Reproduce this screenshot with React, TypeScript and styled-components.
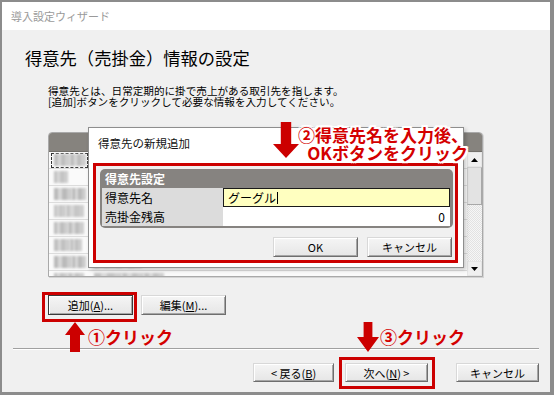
import React from "react";
import styled, { createGlobalStyle } from "styled-components";

const RED = "#cc0000";
const TEXT_RED = "#d40000";

const GlobalStyle = createGlobalStyle`
  html, body { margin: 0; padding: 0; background: #ffffff; }
  body { font-family: "Noto Sans CJK JP", "Noto Sans", sans-serif; }
  * { box-sizing: border-box; }
`;

const Window = styled.div`
  width: 554px;
  height: 395px;
  border: 2px solid #8c8c8c;
  border-right-width: 4px;
  border-bottom-width: 3px;
  display: flex;
  flex-direction: column;
  background: #f0f0f0;
  overflow: hidden;
`;

const TitleBar = styled.div`
  height: 28px;
  flex: none;
  background: #ffffff;
  display: flex;
  align-items: center;
  padding-left: 9px;
  font-size: 11px;
  color: #9a9a9a;
`;

const Body = styled.div`
  position: relative;
  flex: 1;
  display: flex;
  flex-direction: column;
`;

const Heading = styled.h1`
  margin: 17px 0 0 23px;
  font-size: 17.3px;
  line-height: 22px;
  font-weight: 400;
  color: #000;
`;

const Desc = styled.p`
  margin: 16px 0 0 46px;
  font-size: 10.6px;
  line-height: 11px;
  color: #000;
`;

const List = styled.div`
  margin: 25px 0 0 46px;
  width: 435px;
  height: 145px;
  flex: none;
  border: 1px solid #a9a9a9;
  border-radius: 4px 4px 0 0;
  background: #f7f7f7;
  display: flex;
  flex-direction: column;
  overflow: hidden;
  box-shadow: 1px 1px 0 #d4d4d4;
`;

const ListHeader = styled.div`
  height: 19px;
  flex: none;
  background: #86837e;
  border-bottom: 1px solid #74716c;
`;

const ListMain = styled.div`
  flex: 1;
  display: flex;
  min-height: 0;
`;

const Rows = styled.div`
  flex: 1;
  overflow: hidden;
  display: flex;
  flex-direction: column;
`;

const Row = styled.div`
  height: 17px;
  flex: none;
  border-bottom: 1px solid #dcdcdc;
  display: flex;
  align-items: center;
  padding-left: 2px;
  background: #fafafa;
`;

const FirstCell = styled.div<{ $focus?: boolean }>`
  width: 37px;
  height: 15px;
  display: flex;
  align-items: center;
  padding-left: 2px;
  border: 1px ${(p) => (p.$focus ? "dashed #333" : "solid transparent")};
`;

const Blur = styled.div<{ $w: number; $tone: string }>`
  width: ${(p) => p.$w}px;
  height: 12px;
  background: linear-gradient(
    90deg,
    ${(p) => p.$tone} 0 25%,
    #d8d8d8 25% 45%,
    ${(p) => p.$tone} 45% 70%,
    #cdcdcd 70%
  );
  filter: blur(1px);
`;

const SecondCell = styled.div`
  margin-left: 6px;
  display: flex;
  align-items: center;
`;

const ScrollBar = styled.div`
  width: 15px;
  flex: none;
  display: flex;
  flex-direction: column;
  background: #f0f0f0;
`;

const ScrollBtn = styled.div`
  height: 15px;
  flex: none;
  display: flex;
  align-items: center;
  justify-content: center;
  background: #f0f0f0;
  border: 1px solid #e6e6e6;
`;

const Thumb = styled.div`
  height: 38px;
  flex: none;
  background: #e3e3e3;
  border: 1px solid #cfcfcf;
  border-right-color: #a8a8a8;
  border-bottom-color: #a8a8a8;
`;

const Track = styled.div`
  flex: 1;
  background: repeating-conic-gradient(#f6f6f6 0 25%, #e2e2e2 0 50%) 0 0 / 2px 2px;
`;

const Dialog = styled.div`
  position: absolute;
  left: 86px;
  top: 97px;
  width: 376px;
  height: 141px;
  background: #ffffff;
  border: 1px solid #8e8e8e;
  box-shadow: 2px 2px 4px rgba(0, 0, 0, 0.2);
  display: flex;
  flex-direction: column;
  padding: 0 5px 4px 4px;
`;

const DialogTitle = styled.div`
  height: 30px;
  flex: none;
  display: flex;
  align-items: center;
  padding-left: 5px;
  font-size: 11.5px;
  color: #111;
`;

const RedFrame = styled.div`
  flex: 1;
  margin-top: 5px;
  border: 3px solid ${RED};
  background: #f0f0f0;
  padding: 3px 2px 0 4px;
  display: flex;
  flex-direction: column;
`;

const Panel = styled.div`
  background: #868380;
  border-radius: 5px;
  padding: 0 3px 3px 2px;
  display: flex;
  flex-direction: column;
`;

const PanelHeader = styled.div`
  height: 19px;
  display: flex;
  align-items: center;
  padding-left: 3px;
  font-size: 12px;
  font-weight: 700;
  color: #ffffff;
`;

const FieldRow = styled.div<{ $gap?: boolean }>`
  display: grid;
  grid-template-columns: 121px 1fr;
  height: 18px;
  margin-top: ${(p) => (p.$gap ? "1px" : "0")};
`;

const FieldLabel = styled.div`
  background: #dcdcdc;
  display: flex;
  align-items: center;
  padding-left: 3px;
  font-size: 12px;
  color: #000;
`;

const FieldInput = styled.div<{ $active?: boolean }>`
  display: flex;
  align-items: center;
  justify-content: ${(p) => (p.$active ? "flex-start" : "flex-end")};
  padding: 0 4px;
  font-size: 12px;
  color: #000;
  background: ${(p) => (p.$active ? "#ffffc0" : "#ffffff")};
  border: 1px solid ${(p) => (p.$active ? "#1a1a1a" : "#ffffff")};
`;

const Caret = styled.span`
  display: inline-block;
  width: 1px;
  height: 12px;
  background: #000;
  margin-left: 1px;
`;

const DialogButtons = styled.div`
  margin-top: auto;
  margin-bottom: 3px;
  padding-right: 1px;
  display: flex;
  justify-content: flex-end;
  gap: 9px;
`;

const Btn = styled.button<{ $w: number; $h?: number; $primary?: boolean }>`
  width: ${(p) => p.$w}px;
  height: ${(p) => p.$h ?? 20}px;
  padding: 0;
  font-family: inherit;
  font-size: 11px;
  color: #000;
  background: linear-gradient(#f5f5f5, #e6e6e6);
  border: 1px solid;
  border-color: ${(p) => (p.$primary ? "#3a3a3a" : "#d8d8d8 #6e6e6e #6e6e6e #d8d8d8")};
  box-shadow: inset 1px 1px 0 #ffffff, inset -1px -1px 0 #a6a6a6;
  display: flex;
  align-items: center;
  justify-content: center;
  white-space: pre;
  u { text-decoration: underline; text-underline-offset: 1px; }
`;

const Marked = styled.span<{ $t: number; $r: number; $b: number; $l: number }>`
  position: relative;
  display: inline-flex;
  &::after {
    content: "";
    position: absolute;
    top: ${(p) => -p.$t}px;
    right: ${(p) => -p.$r}px;
    bottom: ${(p) => -p.$b}px;
    left: ${(p) => -p.$l}px;
    border: 3px solid ${RED};
    pointer-events: none;
  }
`;

const ButtonRow = styled.div`
  margin: 18px 0 0 46px;
  display: flex;
  gap: 8px;
`;

const Separator = styled.div`
  margin: 33px 11px 0 11px;
  height: 2px;
  border-top: 1px solid #a0a0a0;
  border-bottom: 1px solid #ffffff;
`;

const Footer = styled.div`
  margin-top: 13px;
  padding-right: 11px;
  display: flex;
  justify-content: flex-end;
  align-items: center;
`;

const FooterGap = styled.div<{ $w: number }>`
  width: ${(p) => p.$w}px;
`;

const Note = styled.div<{ $left?: number; $right?: number; $top: number; $outline?: boolean }>`
  position: absolute;
  ${(p) => (p.$left !== undefined ? `left: ${p.$left}px;` : "")}
  ${(p) => (p.$right !== undefined ? `right: ${p.$right}px;` : "")}
  top: ${(p) => p.$top}px;
  font-size: 17px;
  line-height: 18px;
  font-weight: 700;
  color: ${TEXT_RED};
  white-space: nowrap;
  text-align: right;
  text-shadow: ${(p) =>
    p.$outline
      ? "2px 0 0 #fff, -2px 0 0 #fff, 0 2px 0 #fff, 0 -2px 0 #fff, 2px 2px 0 #fff, -2px -2px 0 #fff, 2px -2px 0 #fff, -2px 2px 0 #fff"
      : "none"};
`;

const ArrowBox = styled.svg<{ $left: number; $top: number }>`
  position: absolute;
  left: ${(p) => p.$left}px;
  top: ${(p) => p.$top}px;
  overflow: visible;
`;

function DownArrow({ left, top, w, h, head }: { left: number; top: number; w: number; h: number; head: number }) {
  const sw = w * 0.4;
  const sx = (w - sw) / 2;
  return (
    <ArrowBox $left={left} $top={top} width={w} height={h} viewBox={`0 0 ${w} ${h}`}>
      <path
        d={`M${sx} 0 H${sx + sw} V${h - head} H${w} L${w / 2} ${h} L0 ${h - head} H${sx} Z`}
        fill={RED}
      />
    </ArrowBox>
  );
}

function UpArrow({ left, top, w, h, head }: { left: number; top: number; w: number; h: number; head: number }) {
  const sw = w * 0.5;
  const sx = (w - sw) / 2;
  return (
    <ArrowBox $left={left} $top={top} width={w} height={h} viewBox={`0 0 ${w} ${h}`}>
      <path d={`M${w / 2} 0 L${w} ${head} H${sx + sw} V${h} H${sx} V${head} H0 Z`} fill={RED} />
    </ArrowBox>
  );
}

const rows = [
  { a: [16, 16], tone: "#bdbdbd", focus: true, b: [22, 20, 26] },
  { a: [14], tone: "#c3c3c3", b: [24, 26] },
  { a: [18, 14], tone: "#b9b9b9", b: [20, 22, 24] },
  { a: [12, 18], tone: "#c6c6c6", b: [26, 18] },
  { a: [14, 16], tone: "#bebebe", b: [22, 24] },
  { a: [16, 12], tone: "#c0c0c0", b: [20, 28] },
  { a: [18, 14], tone: "#bababa", b: [22, 26] },
  { a: [14, 16], tone: "#c2c2c2", b: [28, 22, 20] },
];

export default function App() {
  return (
    <>
      <GlobalStyle />
      <Window>
        <TitleBar>導入設定ウィザード</TitleBar>
        <Body>
          <Heading>得意先（売掛金）情報の設定</Heading>
          <Desc>
            得意先とは、日常定期的に掛で売上がある取引先を指します。
            <br />
            [追加]ボタンをクリックして必要な情報を入力してください。
          </Desc>

          <List>
            <ListHeader />
            <ListMain>
              <Rows>
                {rows.map((r, i) => (
                  <Row key={i}>
                    <FirstCell $focus={r.focus}>
                      {r.a.map((w, j) => (
                        <Blur key={j} $w={w} $tone={r.tone} />
                      ))}
                    </FirstCell>
                    <SecondCell>
                      {r.b.map((w, j) => (
                        <Blur key={j} $w={w} $tone={r.tone} />
                      ))}
                    </SecondCell>
                  </Row>
                ))}
              </Rows>
              <ScrollBar>
                <ScrollBtn>
                  <svg width="7" height="4" viewBox="0 0 7 4">
                    <path d="M0 4 L3.5 0 L7 4 Z" fill="#000" />
                  </svg>
                </ScrollBtn>
                <Thumb />
                <Track />
                <ScrollBtn>
                  <svg width="7" height="4" viewBox="0 0 7 4">
                    <path d="M0 0 L7 0 L3.5 4 Z" fill="#000" />
                  </svg>
                </ScrollBtn>
              </ScrollBar>
            </ListMain>
          </List>

          <ButtonRow>
            <Marked $t={3} $r={4} $b={7} $l={6}>
              <Btn $w={85} $primary>
                追加(<u>A</u>)...
              </Btn>
            </Marked>
            <Btn $w={85}>
              編集(<u>M</u>)...
            </Btn>
          </ButtonRow>

          <Separator />

          <Footer>
            <Btn $w={81} $h={19}>
              {"< "}戻る(<u>B</u>)
            </Btn>
            <FooterGap $w={11} />
            <Marked $t={6} $r={7} $b={7} $l={6}>
              <Btn $w={83} $h={19}>
                次へ(<u>N</u>){" >"}
              </Btn>
            </Marked>
            <FooterGap $w={28} />
            <Btn $w={83} $h={19}>
              キャンセル
            </Btn>
          </Footer>

          <Dialog>
            <DialogTitle>得意先の新規追加</DialogTitle>
            <RedFrame>
              <Panel>
                <PanelHeader>得意先設定</PanelHeader>
                <FieldRow>
                  <FieldLabel>得意先名</FieldLabel>
                  <FieldInput $active>
                    グーグル
                    <Caret />
                  </FieldInput>
                </FieldRow>
                <FieldRow $gap>
                  <FieldLabel>売掛金残高</FieldLabel>
                  <FieldInput>0</FieldInput>
                </FieldRow>
              </Panel>
              <DialogButtons>
                <Btn $w={85}>OK</Btn>
                <Btn $w={85}>キャンセル</Btn>
              </DialogButtons>
            </RedFrame>
          </Dialog>

          <DownArrow left={271} top={92} w={26} h={36} head={14} />
          <Note $right={82} $top={96} $outline>
            ②得意先名を入力後、
            <br />
            OKボタンをクリック
          </Note>

          <UpArrow left={63} top={292} w={20} h={30} head={13} />
          <Note $left={86} $top={298}>①クリック</Note>

          <DownArrow left={355} top={292} w={22} h={30} head={15} />
          <Note $left={378} $top={298}>③クリック</Note>
        </Body>
      </Window>
    </>
  );
}
